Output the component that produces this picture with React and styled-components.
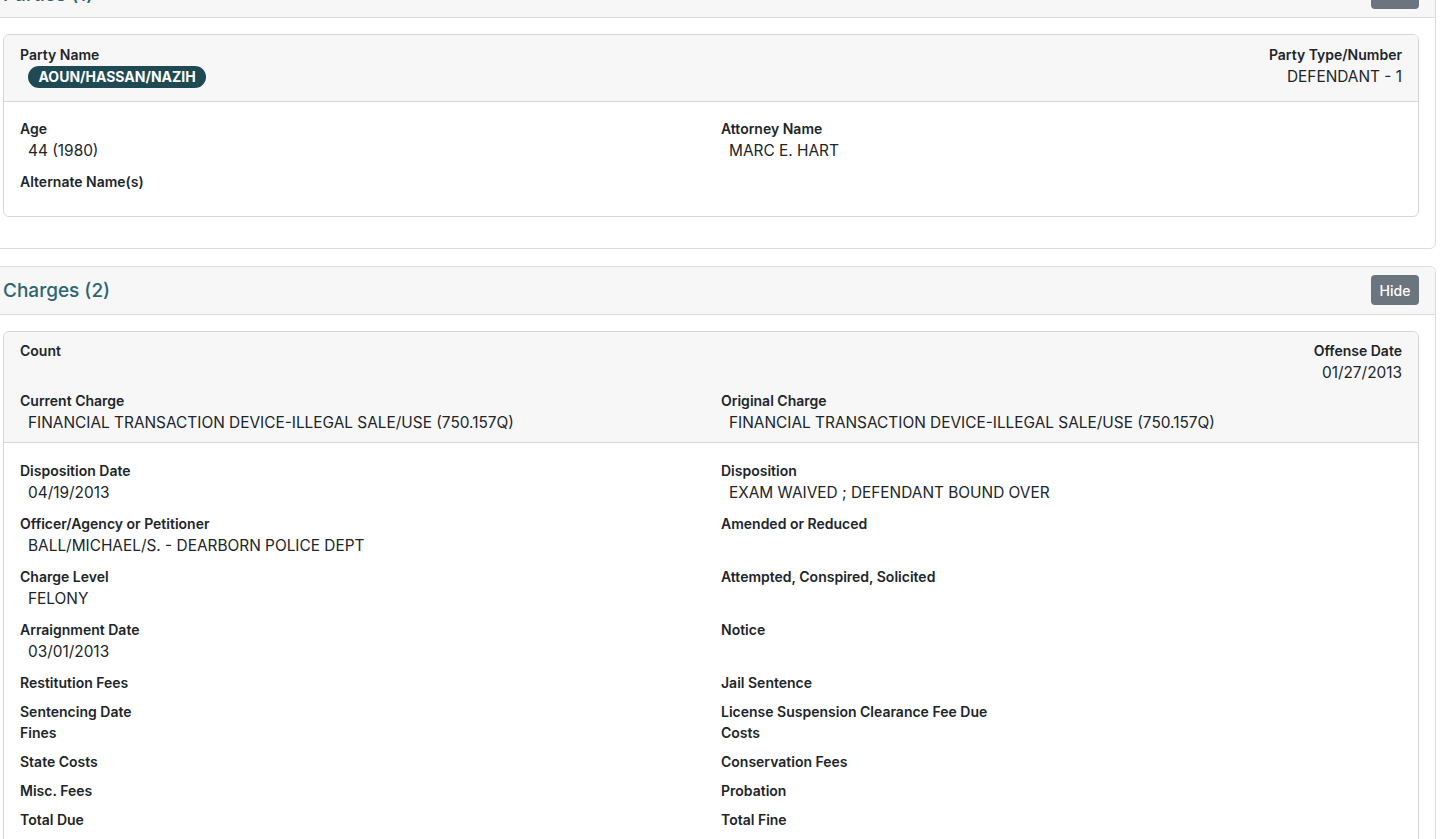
import React from 'react'
import styled, { createGlobalStyle } from 'styled-components'

const GlobalStyle = createGlobalStyle`
  html, body {
    margin: 0;
    padding: 0;
    background: #ffffff;
    overflow: hidden;
  }
  body {
    font-family: Inter, "Liberation Sans", Arial, sans-serif;
    color: #212529;
    -webkit-font-smoothing: antialiased;
  }
`

const chargeRows = [
  [['Disposition Date', '04/19/2013'], ['Disposition', 'EXAM WAIVED ; DEFENDANT BOUND OVER']],
  [['Officer/Agency or Petitioner', 'BALL/MICHAEL/S. - DEARBORN POLICE DEPT'], ['Amended or Reduced', '']],
  [['Charge Level', 'FELONY'], ['Attempted, Conspired, Solicited', '']],
  [['Arraignment Date', '03/01/2013'], ['Notice', '']],
  [['Restitution Fees'], ['Jail Sentence']],
  [['Sentencing Date'], ['License Suspension Clearance Fee Due'], true],
  [['Fines'], ['Costs']],
  [['State Costs'], ['Conservation Fees']],
  [['Misc. Fees'], ['Probation']],
  [['Total Due'], ['Total Fine']],
]

const Field = ({ label, value, right }) => (
  <FieldBox $right={right}>
    <Label>{label}</Label>
    {value !== undefined && <Value $right={right}>{value}</Value>}
  </FieldBox>
)

const App = () => {
  return (
    <Page>
      <GlobalStyle />
      <Section>
        <SectionHeader>
          <SectionTitle>Parties (1)</SectionTitle>
          <HideButton>Hide</HideButton>
        </SectionHeader>
        <SectionBody>
          <DetailCard>
            <CardHeader>
              <Row $mb={5}>
                <FieldBox>
                  <Label>Party Name</Label>
                  <BadgeLine>
                    <Badge>AOUN/HASSAN/NAZIH</Badge>
                  </BadgeLine>
                </FieldBox>
                <Field label="Party Type/Number" value="DEFENDANT - 1" right />
              </Row>
            </CardHeader>
            <CardBody>
              <Row $mb={8}>
                <Field label="Age" value="44 (1980)" />
                <Field label="Attorney Name" value="MARC E. HART" />
              </Row>
              <Row $mb={8}>
                <Field label="Alternate Name(s)" />
              </Row>
            </CardBody>
          </DetailCard>
        </SectionBody>
      </Section>

      <Section>
        <SectionHeader>
          <SectionTitle>Charges (2)</SectionTitle>
          <HideButton>Hide</HideButton>
        </SectionHeader>
        <SectionBody>
          <DetailCard>
            <CardHeader>
              <Row $mb={5}>
                <Field label="Count" />
                <Field label="Offense Date" value="01/27/2013" right />
              </Row>
              <Row $mb={0}>
                <Field label="Current Charge" value="FINANCIAL TRANSACTION DEVICE-ILLEGAL SALE/USE (750.157Q)" />
                <Field label="Original Charge" value="FINANCIAL TRANSACTION DEVICE-ILLEGAL SALE/USE (750.157Q)" />
              </Row>
            </CardHeader>
            <CardBody $top={17}>
              {chargeRows.map(([left, right, tight], i) => (
                <Row key={i} $mb={tight ? 0 : 8}>
                  <Field label={left[0]} value={left[1]} />
                  <Field label={right[0]} value={right[1]} />
                </Row>
              ))}
            </CardBody>
          </DetailCard>
        </SectionBody>
      </Section>
    </Page>
  )
}

export default App

const Page = styled.div`
  margin: -31px 0 0 -14px;
  width: 1450px;
`

const Section = styled.section`
  border: 1px solid #dcdcdc;
  border-radius: 6px;
  background: #fff;
  margin-bottom: 17px;
`

const SectionHeader = styled.div`
  display: flex;
  align-items: center;
  justify-content: space-between;
  padding: 0 16px;
  background: #f7f7f7;
  border-bottom: 1px solid #dcdcdc;
  border-radius: 6px 6px 0 0;
  box-sizing: border-box;
  height: 48px;
`

const SectionTitle = styled.h2`
  margin: 1px 0 0;
  font-size: 19px;
  font-weight: 500;
  color: #2d6571;
`

const HideButton = styled.button`
  height: 30px;
  width: 48px;
  padding: 0;
  border: none;
  border-radius: 4px;
  background: #6c757d;
  color: #fff;
  font-family: inherit;
  font-size: 14px;
  font-weight: 500;
`

const SectionBody = styled.div`
  padding: 16px 16px 31px;
`

const DetailCard = styled.div`
  border: 1px solid #d6d6d6;
  border-radius: 6px;
  background: #fff;
  overflow: hidden;
`

const CardHeader = styled.div`
  background: #f7f7f7;
  border-bottom: 1px solid #d6d6d6;
  padding: 8.5px 16px 7px;
`

const CardBody = styled.div`
  padding: ${(p) => p.$top || 16}px 16px 16px;
`

const Row = styled.div`
  display: grid;
  grid-template-columns: 1fr 1fr;
  column-gap: 20px;
  margin-bottom: ${(p) => p.$mb}px;
`

const FieldBox = styled.div`
  text-align: ${(p) => (p.$right ? 'right' : 'left')};
  grid-column: ${(p) => (p.$right ? '2' : 'auto')};
`

const Label = styled.div`
  font-size: 14px;
  font-weight: 600;
  line-height: 21px;
  color: #212529;
`

const Value = styled.div`
  font-size: 15.4px;
  line-height: 24px;
  min-height: 24px;
  padding-left: ${(p) => (p.$right ? '0' : '8px')};
  color: #212529;
`

const BadgeLine = styled.div`
  height: 24px;
  padding-left: 8px;
  display: flex;
  align-items: center;
`

const Badge = styled.span`
  display: inline-block;
  background: #1f4a54;
  color: #fff;
  font-size: 14px;
  font-weight: 700;
  line-height: 22px;
  padding: 0 10.5px;
  border-radius: 11px;
`
